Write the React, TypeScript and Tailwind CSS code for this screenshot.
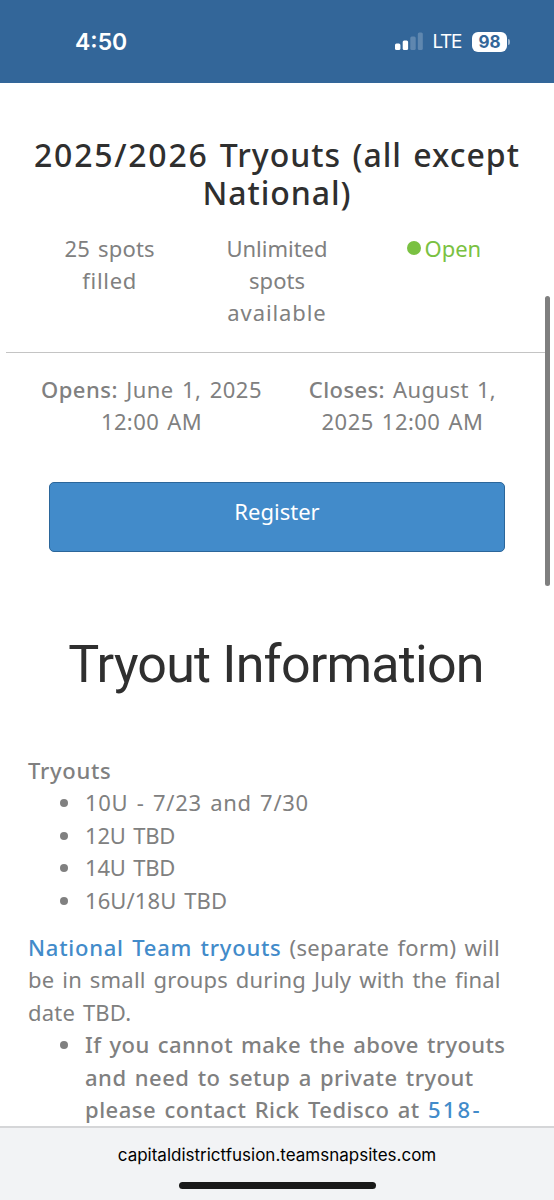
const AGES = [
  { label: '10U - 7/23 and 7/30', tracking: 'tracking-[0.7px]' },
  { label: '12U TBD', tracking: 'tracking-[-0.2px]' },
  { label: '14U TBD', tracking: 'tracking-[-0.2px]' },
  { label: '16U/18U TBD', tracking: 'tracking-[0.1px]' },
];

function StatusBar() {
  return (
    <header className="flex h-[83px] shrink-0 items-center justify-between bg-[#336699] pr-[44px] pl-[75px] font-['Inter'] text-white">
      <span className="text-[23px] leading-7 font-semibold">4:50</span>
      <div className="flex items-center">
        <svg width="28" height="19" viewBox="0 0 28 19" fill="#fff">
          <rect x="0" y="11.500" width="5.4" height="6.500" rx="1.5" />
          <rect x="7.7" y="8.500" width="5.4" height="9.500" rx="1.5" />
          <rect x="15.300" y="4.500" width="5.4" height="13.500" rx="1.5" opacity="0.22" />
          <rect x="22.800" y="0.500" width="5" height="17.500" rx="1.5" opacity="0.22" />
        </svg>
        <span className="ml-[10px] text-[19px] leading-6 tracking-[-1.4px]">LTE</span>
        <span className="ml-[11px] flex h-[20px] w-[35px] items-center justify-center rounded-[6px] bg-white text-[17px] leading-5 font-bold text-[#336699]">98</span>
        <span className="ml-px h-[6px] w-[2px] rounded-r-full bg-white/50" />
      </div>
    </header>
  );
}

function Bullet() {
  return <span className="mt-[13px] mr-[17px] ml-[32px] size-[8px] shrink-0 rounded-full bg-[#808080]" />;
}

export default function App() {
  return (
    <div className="relative flex h-[1200px] w-[554px] flex-col overflow-hidden bg-white font-['Noto_Sans',sans-serif] text-[22px] leading-[32.4px] text-[#808080] [word-spacing:2px]">
      <StatusBar />

      <main className="min-h-0 flex-1 overflow-hidden whitespace-nowrap">
        <section className="text-center">
          <h2 className="pt-[53px] text-[32px] leading-[38px] font-medium text-[#2f2f2f]">
            <span className="block tracking-[1px]"><span className="tracking-[1.75px]">2025/2026</span> Tryouts (all except</span>
            <span className="block tracking-[0.95px]">National)</span>
          </h2>

          <div className="mx-[26px] mt-[20px] grid grid-cols-3 leading-[32.2px]">
            <div>
              <span className="tracking-[0.2px]">25 spots</span><br />
              <span className="tracking-[0.7px]">filled</span>
            </div>
            <div>
              Unlimited<br />
              spots<br />
              <span className="tracking-[0.9px]">available</span>
            </div>
            <div className="flex items-start justify-center text-[#7ac142]">
              <span className="mt-[9px] mr-[3px] size-[14px] rounded-full bg-[#7ac142]" />
              Open
            </div>
          </div>

          <div className="mx-[6px] mt-[23.4px] h-px bg-[#c4c4c4]" />

          <div className="mx-[26px] mt-[20px] grid grid-cols-2 leading-8">
            <div>
              <span className="tracking-[0.5px]"><b className="font-medium">Opens:</b> June 1, 2025</span><br />
              <span className="tracking-[0.4px]">12:00 AM</span>
            </div>
            <div>
              <span className="tracking-[0.4px]"><b className="font-medium">Closes:</b> August 1,</span><br />
              <span className="tracking-[0.45px]">2025 12:00 AM</span>
            </div>
          </div>

          <button className="mt-[45px] ml-[49px] block h-[70px] w-[456px] rounded-[5px] border border-[#2b669a] bg-[#428bca] pb-[11px] text-white">
            Register
          </button>

          <h1 className="mt-[81px] pr-[2px] font-['Roboto'] text-[52px] leading-[64px] tracking-[-0.8px] text-[#2f2f2f] [word-spacing:0px]">Tryout Information</h1>
        </section>

        <section className="px-[28px] pt-[57px]">
          <p className="font-medium tracking-[0.7px]">Tryouts</p>
          <ul>
            {AGES.map(({ label, tracking }) => (
              <li key={label} className={`flex ${tracking}`}><Bullet />{label}</li>
            ))}
          </ul>
          <p className="mt-[15px] tracking-[0.2px]">
            <a className="font-medium tracking-[0.75px] text-[#428bca]">National Team tryouts</a> <span className="tracking-[0.35px]">(separate form) will</span>
            <br />
            be in small groups during July with the final
            <br />
            date TBD.
          </p>
          <div className="flex font-medium">
            <Bullet />
            <p>
              <span className="tracking-[0.4px]">If you cannot make the above tryouts</span>
              <br />
              <span className="tracking-[0.5px]">and need to setup a private tryout</span>
              <br />
              <span className="tracking-[0.52px]">please contact Rick Tedisco at <a className="tracking-[2.2px] text-[#428bca]">518-</a></span>
            </p>
          </div>
        </section>
      </main>

      <div className="absolute top-[296px] right-[4px] h-[290px] w-[5px] rounded-full bg-[#7f7f7f]" />

      <footer className="flex h-[74px] shrink-0 flex-col items-center border-t-2 border-[#d5d6d8] bg-[#f2f3f5] pt-[15px] font-['Inter']">
        <span className="text-[17px] leading-6 text-black">capitaldistrictfusion.teamsnapsites.com</span>
        <span className="mt-[15px] h-[7px] w-[197px] rounded-full bg-[#191919]" />
      </footer>
    </div>
  );
}
